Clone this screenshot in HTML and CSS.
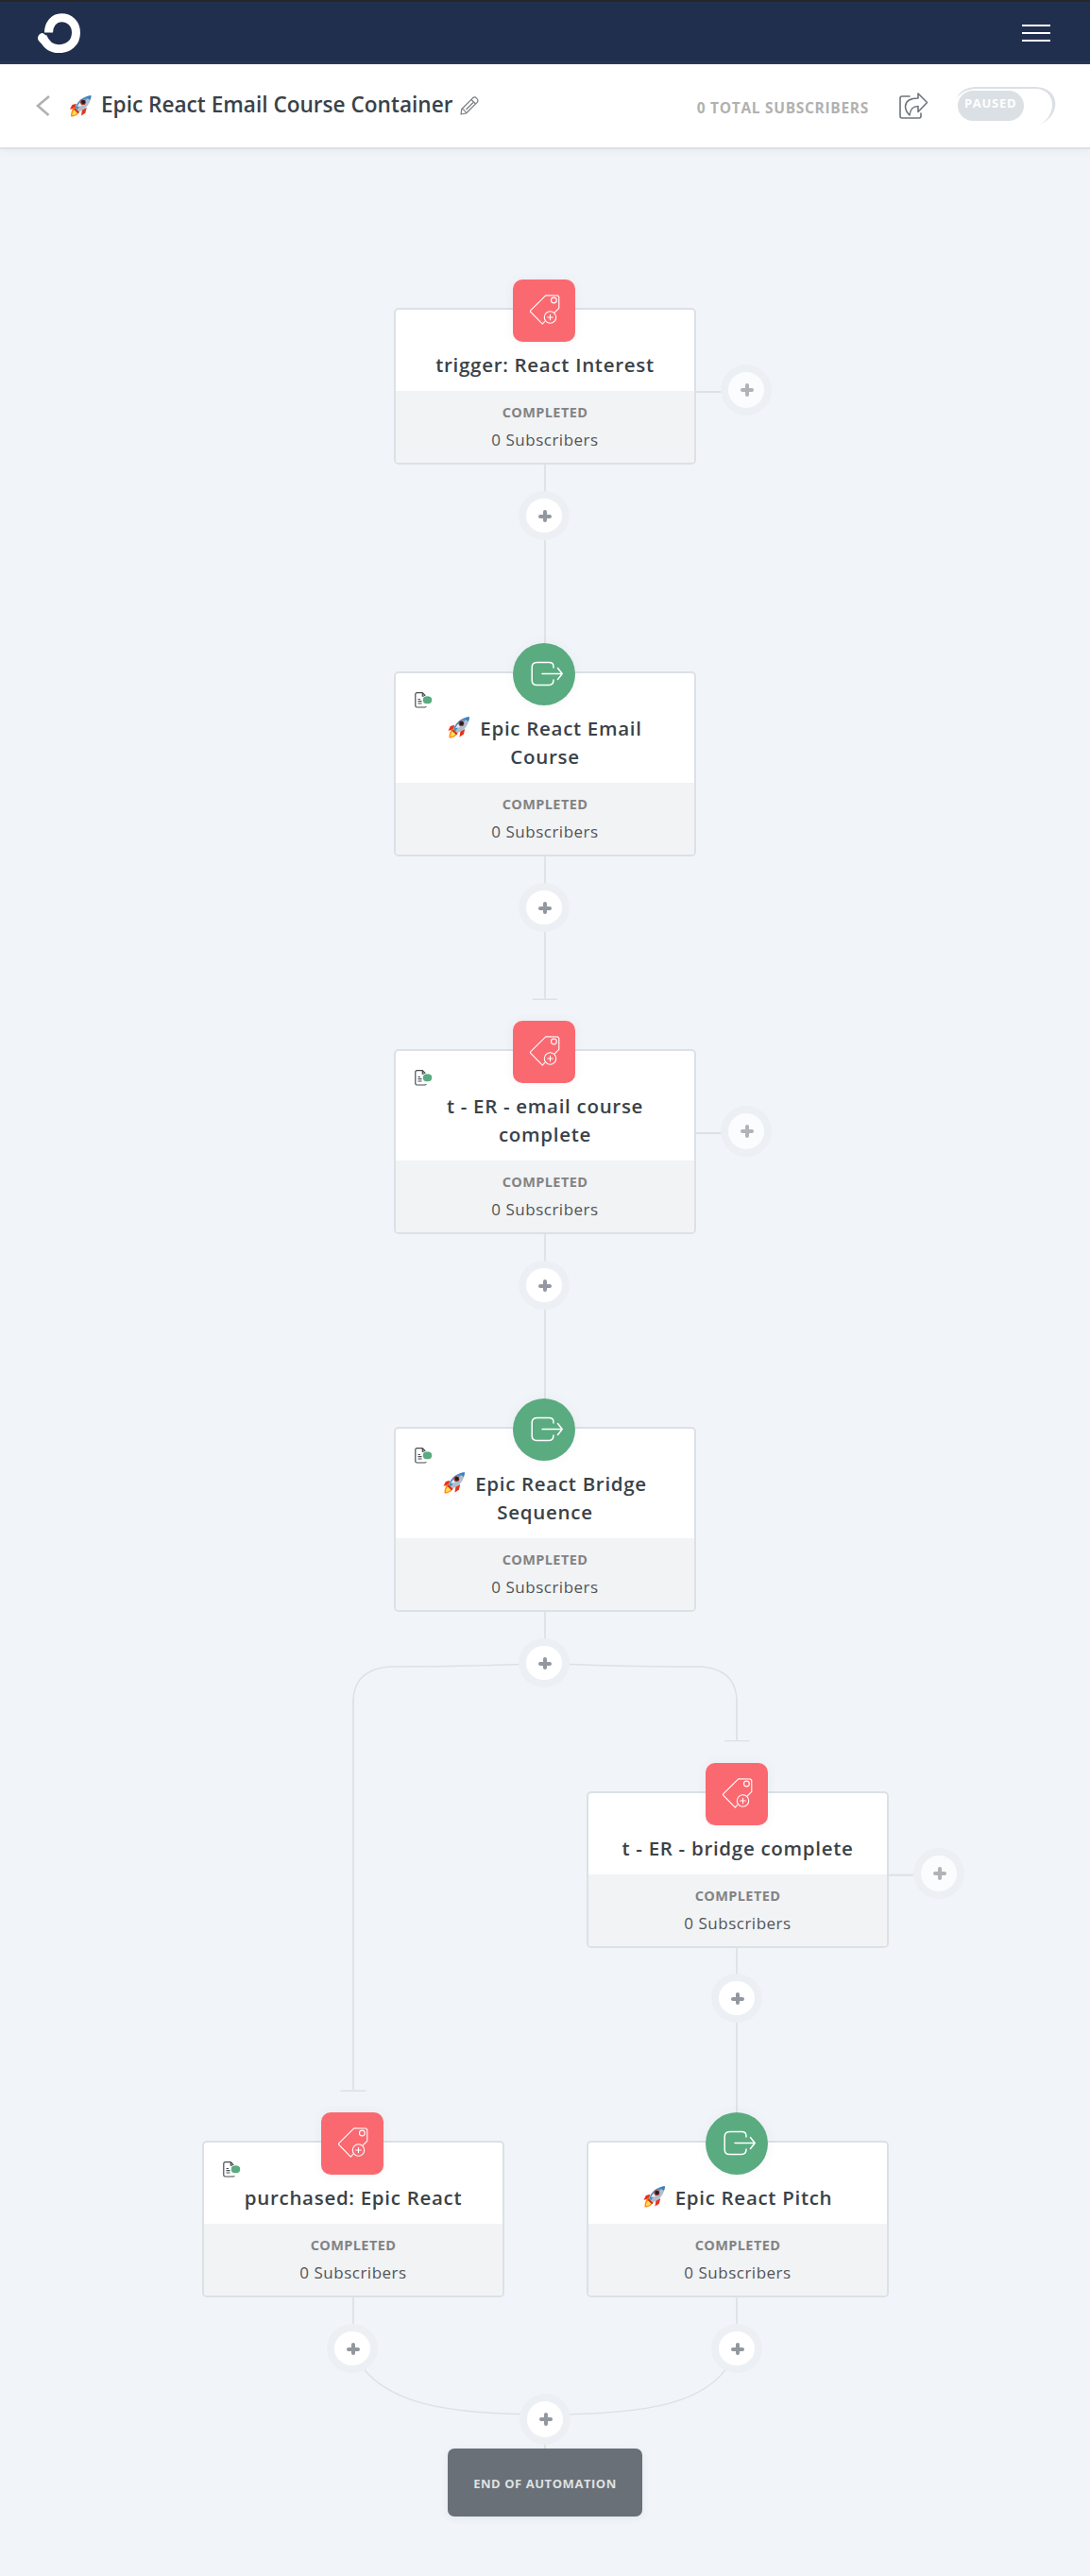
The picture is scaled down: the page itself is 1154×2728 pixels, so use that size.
FILE: index.html
```html
<!DOCTYPE html>
<html lang="en">
<head>
<meta charset="utf-8">
<title>Epic React Email Course Container</title>
<link rel="stylesheet" href="styles.css">
</head>
<body>
<svg class="defs" aria-hidden="true">
  <symbol id="rocket" viewBox="0 0 24 24">
    <path d="M7 9 2.500 10.500 0 15.500l6-1.500z" fill="#e8321f"/>
    <path d="M13.500 16l-1 6.500 4.500-3 1.500-6z" fill="#e8321f"/>
    <path d="M5 13C2 15 1 19 1 23.500c4 0 8-2 9.500-5.500z" fill="#ff8a1e"/>
    <path d="M5.500 15.500C3.500 17 2.500 20 2.500 22c3 0 5-1.500 6-3.500z" fill="#ffe14a"/>
    <path d="M6 14C8 7 14 1 23.500 .3 23 9 17.500 15.500 10 18z" fill="#aebfcc"/>
    <path d="M6 14C8 7 14 1 23.500 .3 17 5 12 10 8 16z" fill="#4d8ec4"/>
    <path d="M8 12.500c2-4 5-7 9-8.500L12 12z" fill="#e3edf3"/>
    <path d="M18 1.800C19.500 1 21.500.6 23.500 .3c0 1.500-.4 3.200-1.300 5z" fill="#3b7fbd"/>
    <circle cx="14.500" cy="7.500" r="3" fill="#b8332c"/>
    <circle cx="14.800" cy="7.300" r="2.200" fill="#1d2026"/>
    <path d="M5.500 14l5 4.500-1.500 1.500-5-4.500z" fill="#d22d20"/>
  </symbol>
  <symbol id="tag" viewBox="0 0 32 32">
    <g fill="none" stroke="#fff" stroke-width="1.100" stroke-linejoin="round" stroke-linecap="round">
      <path d="M15.500 28.700 13.300 31.200.6 18.200V16.800L17 .7l12.500.3 1.300 1.300v12l-4.600 4.500"/>
      <circle cx="25.400" cy="6" r="2.900"/>
      <circle cx="21.500" cy="24" r="6.200"/>
      <path d="M21.500 21.200v5.600M18.700 24h5.600"/>
    </g>
  </symbol>
  <symbol id="exit" viewBox="0 0 34 28">
    <g fill="none" stroke="#fff" stroke-width="1.500" stroke-linejoin="round" stroke-linecap="round">
      <path d="M24 7V6c0-3-1.500-4.500-4.500-4.500H7C3 1.500 1.200 3 1.200 6.500v14C1.200 24 3 25.500 6.500 25.500h12.500c3.500 0 5-2 5-5.500"/>
      <path d="M12 13.500h21M28.500 7.500l4.700 6-4.700 6"/>
    </g>
  </symbol>
  <symbol id="doc" viewBox="0 0 19 17">
    <g fill="none" stroke="#454c51" stroke-width="1.200">
      <path d="M11.500 4 8.300.7H2.500Q.8.700.8 2.300v12.200q0 1.500 1.700 1.500H11q1 0 1.200-1M8.300.7v3.500h3"/>
      <path d="M3.500 7.500h2.500M3.500 9.700h4M3.500 12h4"/>
    </g>
    <rect x="8.300" y="3.900" width="10.400" height="8.800" rx="4.200" fill="#5aab80" stroke="#fff" stroke-width="1"/>
  </symbol>
</svg>

<header class="navbar">
  <svg class="logo" viewBox="0 0 45 42" aria-label="Home"><path d="M11.500 20.500C11.500 12 17 4.700 25 4.700c8.500 0 15.500 6 15.500 15.700 0 11-8 17.300-18.500 17.300-9 0-14-5.500-17-13" fill="none" stroke="#fff" stroke-width="9"/><path d="M3 21.500C6.500 19 9 25 9 25L6 34C1 30 0 28 0 26.500 0 24 1 23 3 21.500z" fill="#fff"/></svg>
  <div class="menu"><i></i><i></i><i></i></div>
</header>

<div class="toolbar">
  <svg class="back" viewBox="0 0 15 22"><path d="M14 1 2 11l11.500 10" fill="none" stroke="#b1b1b1" stroke-width="2.600"/></svg>
  <svg class="rocket"><use href="#rocket"/></svg>
  <h1 class="title">Epic React Email Course Container</h1>
  <svg class="pencil" viewBox="0 0 20 20"><g fill="none" stroke="#777d81" stroke-width="1.200" stroke-linejoin="round"><path d="M1 19l.8-5.500L13.500 1.800q2-1.800 4.200.3t.5 4.300L6.500 18z"/><path d="M2 13.500q3 .5 4.500 4.500M12 3.500l4.500 4.500M14 6.500 6.500 14"/></g></svg>
  <span class="total">0 TOTAL SUBSCRIBERS</span>
  <svg class="share" viewBox="0 0 31 28"><g fill="none" stroke="#6d757b" stroke-width="1.600" stroke-linejoin="round" stroke-linecap="round"><path d="M11 4H3Q1 4 1 6v19q0 2 2 2h18q2 0 2-2v-3"/><path d="M20 1l9.500 9.500L20 20.500v-6c-5 0-8 2-9 9.500-3-3-4.500-6.500-4.500-9.500C7 9 12 6 20 6z"/></g></svg>
  <div class="toggle">
    <svg class="track" viewBox="0 0 106 42"><path d="M0 13Q5 1 20 0H84C110 0 113 29 89 40 108 29 106 2 84 2H20Q7 3 0 13z" fill="#dbe0e5"/></svg>
    <span class="knob">PAUSED</span>
  </div>
</div>

<main class="canvas">
  <svg class="links" viewBox="0 0 1154 2728">
    <g fill="none" stroke="#e0e4e7" stroke-width="2">
      <path d="M577 491V690M577 906V1058M577 1306V1490M577 1706V1762M780 1800V1843M374 1800V2213M780 2062V2250M374 2432V2487M780 2432V2487M577 2562V2594"/>
      <path d="M736 415H777M736 1200H777M940 1985.700H981" stroke="#dce1e5"/>
      <g stroke="#dce1e5" stroke-width="1.400">
        <path d="M564 1058.200h26M767 1843.600h26.500M360.500 2214.200h27"/>
        <path d="M577 1761Q510 1765 413 1765Q374 1768 374 1802M577 1761Q640 1765 742 1765Q780 1768 780 1802"/>
        <path d="M373 2487C395 2548 480 2557 577 2557M780 2487C760 2548 680 2557 577 2557"/>
      </g>
    </g>
  </svg>

  <article class="node n1"><span class="badge tag"><svg><use href="#tag"/></svg></span><h2>trigger: React Interest</h2><div class="stats"><b>COMPLETED</b><span>0 Subscribers</span></div></article>
  <article class="node n2"><span class="badge seq"><svg><use href="#exit"/></svg></span><svg class="doc"><use href="#doc"/></svg><h2><svg class="rocket"><use href="#rocket"/></svg>Epic React Email<br>Course</h2><div class="stats"><b>COMPLETED</b><span>0 Subscribers</span></div></article>
  <article class="node n3"><span class="badge tag"><svg><use href="#tag"/></svg></span><svg class="doc"><use href="#doc"/></svg><h2>t - ER - email course complete</h2><div class="stats"><b>COMPLETED</b><span>0 Subscribers</span></div></article>
  <article class="node n4"><span class="badge seq"><svg><use href="#exit"/></svg></span><svg class="doc"><use href="#doc"/></svg><h2><svg class="rocket"><use href="#rocket"/></svg>Epic React Bridge<br>Sequence</h2><div class="stats"><b>COMPLETED</b><span>0 Subscribers</span></div></article>
  <article class="node n5"><span class="badge tag"><svg><use href="#tag"/></svg></span><h2>t - ER - bridge complete</h2><div class="stats"><b>COMPLETED</b><span>0 Subscribers</span></div></article>
  <article class="node n6"><span class="badge tag"><svg><use href="#tag"/></svg></span><svg class="doc"><use href="#doc"/></svg><h2>purchased: Epic React</h2><div class="stats"><b>COMPLETED</b><span>0 Subscribers</span></div></article>
  <article class="node n7"><span class="badge seq"><svg><use href="#exit"/></svg></span><h2><svg class="rocket"><use href="#rocket"/></svg>Epic React Pitch</h2><div class="stats"><b>COMPLETED</b><span>0 Subscribers</span></div></article>

  <i class="add a1"></i>
  <i class="add a2"></i>
  <i class="add a3"></i>
  <i class="add a4"></i>
  <i class="add a5"></i>
  <i class="add a6"></i>
  <i class="add a7"></i>
  <i class="add round a8"></i>
  <i class="add round side s1"></i>
  <i class="add round side s2"></i>
  <i class="add round side s3"></i>

  <div class="end">END OF AUTOMATION</div>
</main>
</body>
</html>
```
FILE: styles.css
```css
* { box-sizing: border-box; }
body {
  margin: 0;
  position: relative;
  height: 2728px;
  background: #f1f5f9;
  font-family: "Open Sans", "Noto Sans", sans-serif;
  color: #3a4248;
}
svg { display: block; }
.defs { position: absolute; width: 0; height: 0; }

.navbar {
  height: 68px;
  border-top: 2px solid #272727;
  background: linear-gradient(#212f4f 61px, #2e3a5c 66px);
  display: flex;
  align-items: flex-start;
  justify-content: space-between;
  padding: 12px 42px 0 40px;
}
.logo { width: 45px; height: 42px; }
.menu { display: flex; flex-direction: column; gap: 6px; width: 30px; padding-top: 12px; }
.menu i { height: 2px; background: #fff; }

.toolbar {
  position: relative;
  z-index: 1;
  height: 90px;
  background: #fff;
  border-bottom: 2px solid #dae1e8;
  box-shadow: 0 2px 8px rgba(60, 60, 60, .06);
  display: flex;
  align-items: center;
  padding: 0 38px 0 38px;
}
.back { width: 15px; height: 22px; }
.toolbar .rocket { width: 23px; height: 23px; margin-left: 21px; }
.title { margin: 0 0 0 10px; font-size: 22.6px; font-weight: 600; line-height: 30px; padding-bottom: 2px; white-space: nowrap; }
.pencil { width: 20px; height: 20px; margin-left: 8px; }
.total { margin-left: auto; font-size: 15.5px; font-weight: 700; letter-spacing: .7px; color: #b1b1b1; line-height: 22px; padding-top: 4px; }
.share { width: 31px; height: 28px; margin-left: 32px; }
.toggle { position: relative; width: 104px; height: 40px; margin-left: 29px; padding: 4px 2px; }
.track { position: absolute; left: 0; top: 0; width: 106px; height: 42px; }
.knob {
  position: relative;
  display: block;
  width: 70px;
  height: 32px;
  border-radius: 16px;
  background: #dbe0e5;
  color: #fff;
  font-size: 13px;
  font-weight: 700;
  letter-spacing: .7px;
  line-height: 27px;
  padding-left: 7px;
}

.canvas { position: absolute; left: 0; top: 0; width: 1154px; height: 2728px; }
.links { position: absolute; left: 0; top: 0; width: 1154px; height: 2728px; }

.node {
  position: absolute;
  width: 320px;
  background: #fff;
  border: 2px solid #dbe1e6;
  border-radius: 5px;
  padding-top: 43px;
  text-align: center;
}
.node h2 {
  margin: 0;
  padding: 0 38px 13px;
  font-size: 20.5px;
  font-weight: 600;
  line-height: 30px;
  letter-spacing: .7px;
}
.n1 h2, .n5 h2, .n6 h2 { padding-left: 20px; padding-right: 20px; }
.node .rocket { display: inline-block; width: 24px; height: 23px; margin-right: 10px; vertical-align: -3px; }
.stats { height: 76px; background: #f1f3f5; display: flex; flex-direction: column; align-items: center; padding-top: 12px; border-radius: 0 0 4px 4px; }
.stats b { font-size: 14.5px; line-height: 22px; letter-spacing: .4px; color: #838383; }
.stats span { font-size: 17px; line-height: 24px; letter-spacing: .5px; color: #525457; margin-top: 6px; }

.badge {
  position: absolute;
  left: 124px;
  top: -32px;
  width: 66px;
  height: 66px;
  display: flex;
  box-shadow: 0 0 12px rgba(80, 80, 120, .06);
}
.badge.tag { background: #fb6970; border-radius: 10px; padding: 16px 0 0 18px; }
.badge.tag svg { width: 32px; height: 32px; }
.badge.seq { background: #5aab80; border-radius: 50%; padding: 19px 0 0 19px; }
.badge.seq svg { width: 34px; height: 28px; }
.doc { position: absolute; left: 20px; top: 20px; width: 19px; height: 17px; }

.n1 { left: 417px; top: 326px; }
.n2 { left: 417px; top: 711px; }
.n3 { left: 417px; top: 1111px; }
.n4 { left: 417px; top: 1511px; }
.n5 { left: 621px; top: 1897px; }
.n6 { left: 214px; top: 2267px; }
.n7 { left: 621px; top: 2267px; }

.add {
  position: absolute;
  width: 38px;
  height: 36px;
  border-radius: 50%;
  background: #fff;
  box-shadow: 0 0 0 8px #ecf0f4;
}
.add::before, .add::after {
  content: "";
  position: absolute;
  border-radius: 2px;
  background: #93979f;
}
.add::before { left: 13px; top: 17px; width: 14px; height: 4px; }
.add::after { left: 18px; top: 12px; width: 4px; height: 13px; }
.round { height: 38px; }
.round::before { top: 17px; }
.round::after { top: 12px; height: 14px; }
.side { background: #fbfcfe; }
.side::before, .side::after { background: #b1b3b6; }
.a1 { left: 557px; top: 528px; }
.a2 { left: 557px; top: 943px; }
.a3 { left: 557px; top: 1343px; }
.a4 { left: 557px; top: 1743px; }
.a5 { left: 761px; top: 2098px; }
.a6 { left: 354px; top: 2469px; }
.a7 { left: 761px; top: 2469px; }
.a8 { left: 558px; top: 2543px; }
.s1 { left: 771px; top: 394px; }
.s2 { left: 771px; top: 1179px; }
.s3 { left: 975px; top: 1965px; }

.end {
  position: absolute;
  left: 474px;
  top: 2593px;
  width: 206px;
  height: 72px;
  border-radius: 7px;
  background: #697077;
  color: #dfe1e2;
  box-shadow: 0 2px 8px rgba(80, 80, 120, .08);
  font-size: 13px;
  font-weight: 700;
  letter-spacing: .55px;
  line-height: 74px;
  text-align: center;
}
```
